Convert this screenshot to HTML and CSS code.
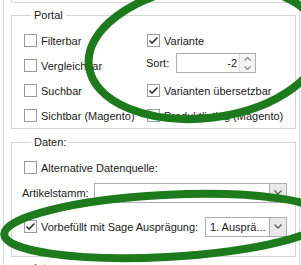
FILE: index.html
```html
<!DOCTYPE html>
<html lang="de">
<head>
    <meta charset="UTF-8">
    <title>Artikel Einstellungen</title>
    <link rel="stylesheet" href="styles.css">
</head>
<body>
    <div class="frame">
        <div class="group-prev"></div>

        <fieldset class="group portal">
            <legend>Portal</legend>
            <div class="portal-grid">
                <label class="check"><span class="box"></span>Filterbar</label>
                <label class="check"><span class="box"><svg viewBox="0 0 11 11"><polyline points="1.5,5.5 4,8 9.5,2.5"/></svg></span>Variante</label>
                <label class="check"><span class="box"></span>Vergleichbar</label>
                <div class="sort-row">
                    <span class="sort-label">Sort:</span>
                    <div class="spin">
                        <span class="spin-value">-2</span>
                        <div class="spin-buttons">
                            <svg viewBox="0 0 7 4"><polyline points="0.5,3.5 3.5,0.5 6.5,3.5"/></svg>
                            <svg viewBox="0 0 7 4"><polyline points="0.5,0.5 3.5,3.5 6.5,0.5"/></svg>
                        </div>
                    </div>
                </div>
                <label class="check"><span class="box"></span>Suchbar</label>
                <label class="check"><span class="box"><svg viewBox="0 0 11 11"><polyline points="1.5,5.5 4,8 9.5,2.5"/></svg></span>Varianten übersetzbar</label>
                <label class="check"><span class="box"></span>Sichtbar (Magento)</label>
                <label class="check"><span class="box"></span>Produktlisting (Magento)</label>
            </div>
        </fieldset>

        <fieldset class="group daten">
            <legend>Daten:</legend>
            <label class="check row"><span class="box"></span>Alternative Datenquelle:</label>
            <div class="field-row">
                <span class="field-label">Artikelstamm:</span>
                <div class="combo wide">
                    <span class="combo-text"></span>
                    <span class="combo-button"><svg viewBox="0 0 8 5"><polyline points="0.5,0.5 4,4 7.5,0.5"/></svg></span>
                </div>
            </div>
            <div class="field-row prefill">
                <label class="check"><span class="box"><svg viewBox="0 0 11 11"><polyline points="1.5,5.5 4,8 9.5,2.5"/></svg></span>Vorbefüllt mit Sage Ausprägung:</label>
                <div class="combo narrow">
                    <span class="combo-text">1. Ausprä...</span>
                    <span class="combo-button"><svg viewBox="0 0 8 5"><polyline points="0.5,0.5 4,4 7.5,0.5"/></svg></span>
                </div>
            </div>
        </fieldset>

        <fieldset class="group intern">
            <legend>Intern</legend>
        </fieldset>
    </div>

    <!-- Markierungen über dem Formular -->
    <svg class="marks" viewBox="0 0 301 265">
        <ellipse cx="205" cy="52" rx="117" ry="66" transform="rotate(-7 205 52)"/>
        <ellipse cx="165" cy="226" rx="161" ry="31" transform="rotate(-3 165 226)"/>
    </svg>
</body>
</html>
```

FILE: styles.css
```css
body {
    margin: 0;
    padding: 0;
    background: #fff;
    font-family: "Liberation Sans", Arial, sans-serif;
    font-size: 11px;
    color: #1a1a1a;
    overflow: hidden;
}
.frame {
    margin-left: 3px;
    width: 297px;
    height: 265px;
    box-sizing: border-box;
    border-left: 1px solid #dadada;
    border-right: 1px solid #dadada;
    padding: 0 3px 0 7px;
}
.group-prev {
    height: 2px;
    border: 1px solid #d5d5d5;
    border-top: none;
}
.group {
    margin: 0;
    padding: 6px 8px 0 12px;
    border: 1px solid #d5d5d5;
    min-width: 0;
}
.group legend {
    margin-left: 7px;
    padding: 0 3px;
    line-height: 14px;
}
.portal {
    margin-top: 5px;
}
.portal-grid {
    display: grid;
    grid-template-columns: 123px 1fr;
    grid-auto-rows: 25px;
}
.check {
    display: flex;
    align-items: center;
    white-space: nowrap;
}
.box {
    width: 13px;
    height: 13px;
    box-sizing: border-box;
    border: 1px solid #9a9a9a;
    margin-right: 4px;
    flex-shrink: 0;
    display: flex;
    align-items: center;
    justify-content: center;
}
.box svg {
    width: 11px;
    height: 11px;
}
.box polyline {
    fill: none;
    stroke: #333;
    stroke-width: 1.6;
}
.sort-row {
    display: flex;
    align-items: flex-start;
}
.sort-label {
    width: 30px;
    margin-left: -1px;
    line-height: 20px;
}
.spin {
    width: 80px;
    height: 20px;
    box-sizing: border-box;
    border: 1px solid #abadb3;
    display: flex;
}
.spin-value {
    flex: 1;
    text-align: right;
    padding-right: 2px;
    line-height: 18px;
}
.spin-buttons {
    width: 15px;
    border-left: 1px solid #dcdcdc;
    background: #f3f3f3;
    display: flex;
    flex-direction: column;
    align-items: center;
    justify-content: space-around;
}
.spin-buttons svg {
    width: 7px;
    height: 4px;
}
.spin-buttons polyline,
.combo-button polyline {
    fill: none;
    stroke: #8a8a8a;
    stroke-width: 1.3;
}
.daten {
    margin-top: 6px;
    padding-bottom: 17px;
}
.row {
    height: 25px;
}
.field-row {
    display: flex;
    align-items: center;
    height: 25px;
}
.field-label {
    width: 72px;
    margin-left: -2px;
}
.prefill {
    margin-top: 9px;
}
.combo {
    height: 20px;
    box-sizing: border-box;
    border: 1px solid #abadb3;
    display: flex;
}
.combo.wide {
    flex: 1;
}
.combo.narrow {
    width: 82px;
    margin-left: auto;
}
.combo-text {
    flex: 1;
    padding-left: 4px;
    line-height: 18px;
    white-space: nowrap;
    overflow: hidden;
}
.combo-button {
    width: 16px;
    border-left: 1px solid #acacac;
    background: #e8e8e8;
    display: flex;
    align-items: center;
    justify-content: center;
}
.combo-button svg {
    width: 8px;
    height: 5px;
}
.combo-button polyline {
    stroke: #606060;
}
.intern {
    margin-top: 4px;
    height: 20px;
}
.marks {
    position: absolute;
    left: 0;
    top: 0;
    width: 301px;
    height: 265px;
    pointer-events: none;
}
.marks ellipse {
    fill: none;
    stroke: #1d7a1d;
    stroke-width: 8;
}
```
